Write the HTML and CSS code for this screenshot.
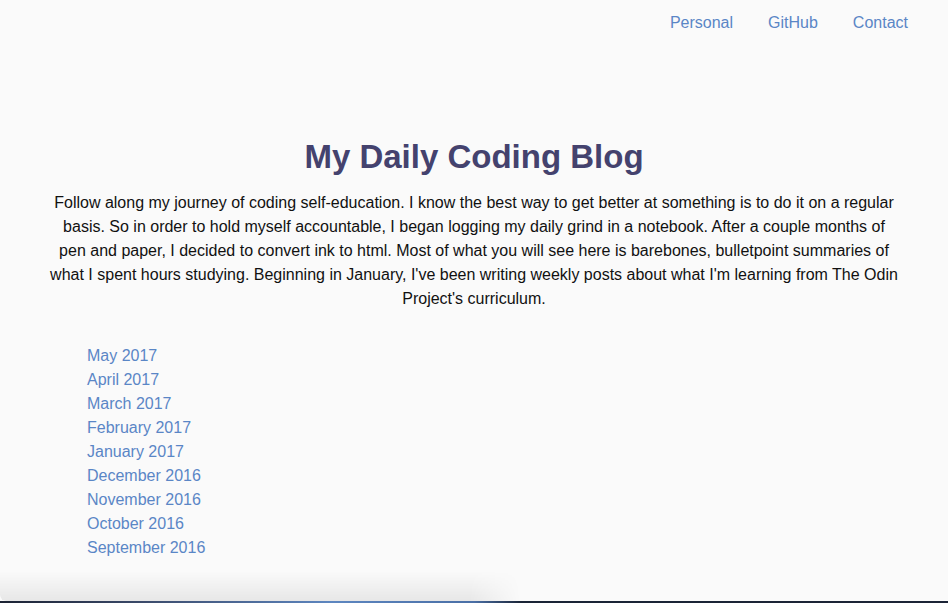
FILE: index.html
```html
<!DOCTYPE html>
<html lang="en">
<head>
<meta charset="utf-8">
<title>My Daily Coding Blog</title>
<link rel="stylesheet" href="styles.css">
</head>
<body>
<nav class="nav">
  <a href="#">Personal</a>
  <a href="#">GitHub</a>
  <a href="#">Contact</a>
</nav>
<header class="intro">
  <h1 class="title">My Daily Coding Blog</h1>
  <p class="lead">Follow along my journey of coding self-education. I know the best way to get better at something is to do it on a regular basis. So in order to hold myself accountable, I began logging my daily grind in a notebook. After a couple months of pen and paper, I decided to convert ink to html. Most of what you will see here is barebones, bulletpoint summaries of what I spent hours studying. Beginning in January, I've been writing weekly posts about what I'm learning from The Odin Project's curriculum.</p>
</header>
<ul class="archive">
  <li><a href="#">May 2017</a></li>
  <li><a href="#">April 2017</a></li>
  <li><a href="#">March 2017</a></li>
  <li><a href="#">February 2017</a></li>
  <li><a href="#">January 2017</a></li>
  <li><a href="#">December 2016</a></li>
  <li><a href="#">November 2016</a></li>
  <li><a href="#">October 2016</a></li>
  <li><a href="#">September 2016</a></li>
</ul>
<div class="shadow"></div>
<div class="desktop"></div>
</body>
</html>
```
FILE: styles.css
```css
html, body {
  margin: 0;
  padding: 0;
}
body {
  background: #fafafa;
  font-family: "Liberation Sans", Arial, Helvetica, sans-serif;
  font-size: 16px;
  line-height: 24px;
  color: #111;
  height: 603px;
  overflow: hidden;
}
a {
  text-decoration: none;
  color: #5a86c6;
}
.nav {
  display: flex;
  justify-content: flex-end;
  gap: 35px;
  padding: 11px 40px 0 0;
}
.intro {
  margin-top: 102px;
  padding: 0 48px;
  text-align: center;
}
.title {
  margin: 0;
  font-size: 33px;
  line-height: 40px;
  font-weight: bold;
  color: #44426e;
}
.lead {
  margin: 14px 0 0;
}
.archive {
  list-style: none;
  margin: 33px 0 0;
  padding: 0 0 0 87px;
}
.shadow {
  position: fixed;
  left: 0;
  bottom: 2px;
  width: 520px;
  height: 30px;
  background: linear-gradient(to bottom, rgba(0,0,0,0), rgba(0,0,0,0.075));
  -webkit-mask-image: linear-gradient(to right, #000 0, #000 470px, transparent 520px);
  mask-image: linear-gradient(to right, #000 0, #000 470px, transparent 520px);
  border-bottom-left-radius: 6px;
}
.desktop {
  position: fixed;
  left: 0;
  right: 0;
  bottom: 0;
  height: 2px;
  background: linear-gradient(to right, #1b2233 0, #3b4a6a 15%, #5d86c0 35%, #4a6fa6 50%, #1a2436 55%, #1c2436 100%);
}
```
